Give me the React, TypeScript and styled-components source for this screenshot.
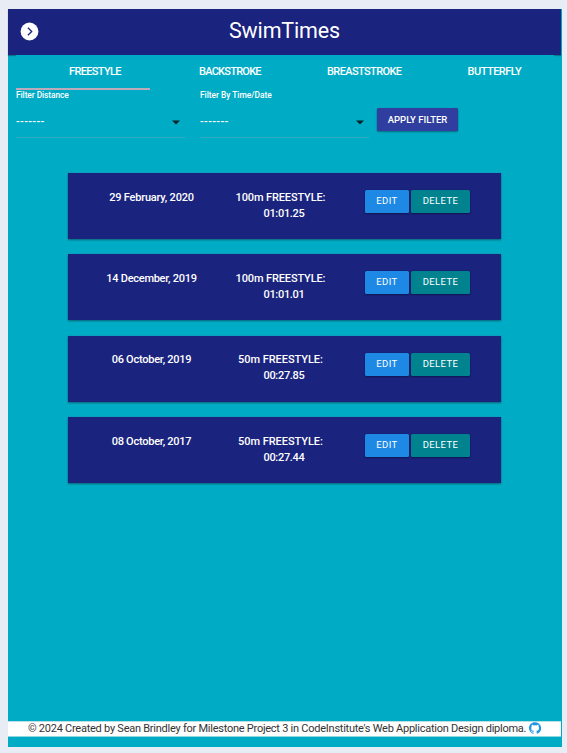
import React from "react";
import styled, { createGlobalStyle } from "styled-components";

const GlobalStyle = createGlobalStyle`
  * { box-sizing: border-box; }
  body {
    margin: 0;
    background: #e8edf5;
    font-family: "Roboto", "Liberation Sans", sans-serif;
    color: #fff;
  }
`;

const Page = styled.div`
  width: 567px;
  height: 753px;
  padding: 9px 5px 6px 8px;
`;

const Screen = styled.div`
  height: 738px;
  display: flex;
  flex-direction: column;
  background: #00acc5;
`;

const NavBar = styled.header`
  width: 553px;
  height: 46px;
  flex: none;
  display: grid;
  grid-template-columns: 46px 1fr 46px;
  align-items: center;
  background: #1a237e;
  box-shadow: 0 1px 1px rgba(0, 0, 0, 0.3);
`;

const MenuButton = styled.button`
  display: flex;
  margin: 0 0 2px 12px;
  padding: 0;
  border: 0;
  background: none;
`;

const Title = styled.h1`
  margin: 0;
  padding-bottom: 2px;
  text-align: center;
  font-size: 21.5px;
  font-weight: 400;
  line-height: 44px;
  letter-spacing: -0.15px;
`;

const Content = styled.main`
  flex: 1;
  padding: 0 8px;
`;

const Tabs = styled.nav`
  height: 35px;
  display: flex;
  position: relative;
  background: #00acc5;
`;

const Tab = styled.a<{ $active?: boolean; $indent: number; $spacing: number }>`
  width: 134px;
  height: 35px;
  flex: none;
  padding-left: ${(p) => p.$indent}px;
  border-bottom: 2px solid ${(p) => (p.$active ? "#bca9b9" : "transparent")};
  font-size: 11px;
  font-weight: 500;
  line-height: 33px;
  letter-spacing: ${(p) => p.$spacing}px;
  white-space: nowrap;
`;

const Filters = styled.form`
  display: flex;
  height: 48px;
`;

const Field = styled.div`
  width: 169px;
  height: 48px;
  margin-right: 15px;
  border-bottom: 1px solid #35a9bd;

  & + & { margin-right: 8px; }
`;

const Label = styled.label<{ $spacing: number }>`
  display: block;
  height: 12px;
  font-size: 8.4px;
  font-weight: 500;
  line-height: 11px;
  letter-spacing: ${(p) => p.$spacing}px;
  white-space: nowrap;
`;

const SelectValue = styled.div`
  height: 35px;
  padding: 5px 5px 0 0;
  display: flex;
  align-items: center;
  justify-content: space-between;
`;

const Dashes = styled.span`
  font-size: 11px;
  font-weight: 500;
  line-height: 14px;
  letter-spacing: 0.35px;
  white-space: nowrap;
`;

const Button = styled.button<{ $color: string; $width: number; $spacing?: number }>`
  width: ${(p) => p.$width}px;
  height: 23px;
  flex: none;
  padding: 0 0 2px;
  border: 0;
  border-radius: 1.5px;
  background: ${(p) => p.$color};
  color: #fff;
  box-shadow: 0 1px 2px rgba(0, 0, 0, 0.35), 0 0 1px rgba(0, 0, 0, 0.3);
  font-family: inherit;
  font-size: 9.5px;
  line-height: 21px;
  letter-spacing: ${(p) => p.$spacing ?? 0.4}px;
  text-align: center;
  white-space: nowrap;
`;

const ApplyButton = styled(Button)`
  margin-top: 18px;
  padding: 0;
  line-height: 23px;
  font-weight: 500;
`;

const Results = styled.section`
  width: 433px;
  margin: 35px 0 0 52px;
  display: flex;
  flex-direction: column;
  gap: 15.4px;
`;

const Card = styled.article`
  height: 66px;
  padding: 16.6px 31px 0 26px;
  display: grid;
  grid-template-columns: 115px 143px 1fr;
  background: #1a237e;
  box-shadow: 0 1px 2px rgba(0, 0, 0, 0.4), 0 0 1px rgba(80, 120, 160, 0.8);
  font-size: 11px;
  font-weight: 500;
  line-height: 16px;
  text-align: center;
`;

const DateText = styled.time<{ $spacing: number }>`
  letter-spacing: ${(p) => p.$spacing}px;
  white-space: nowrap;
`;

const Swim = styled.div<{ $spacing: number }>`
  letter-spacing: ${(p) => p.$spacing}px;
  white-space: nowrap;
`;

const Time = styled.div`
  letter-spacing: -0.3px;
  padding-left: 7px;
`;

const Actions = styled.div`
  padding-top: 0.5px;
  display: flex;
  justify-content: flex-end;
  gap: 2px;
`;

const Footer = styled.footer`
  width: 553px;
  height: 16px;
  flex: none;
  margin-bottom: 10px;
  padding: 0 0 1px 20px;
  display: flex;
  align-items: center;
  background: #fff;
  border-top: 1px solid #b9dfe6;
  border-bottom: 1px solid #8dd6e2;
  color: #333;
`;

const Credit = styled.span`
  width: 501px;
  font-size: 11px;
  line-height: 14px;
  letter-spacing: -0.25px;
  white-space: nowrap;
`;

const GitHubMark = styled.svg`
  margin-bottom: 2px;
`;

const tabs = [
  { name: "FREESTYLE", indent: 53, spacing: -0.65 },
  { name: "BACKSTROKE", indent: 49, spacing: -0.75 },
  { name: "BREASTSTROKE", indent: 43, spacing: -0.6 },
  { name: "BUTTERFLY", indent: 49.5, spacing: -0.5 },
];

const swims = [
  { date: "29 February, 2020", dateSpacing: -0.2, event: "100m FREESTYLE:", spacing: -0.13, time: "01:01.25" },
  { date: "14 December, 2019", dateSpacing: -0.27, event: "100m FREESTYLE:", spacing: -0.13, time: "01:01.01" },
  { date: "06 October, 2019", dateSpacing: -0.25, event: "50m FREESTYLE:", spacing: -0.05, time: "00:27.85" },
  { date: "08 October, 2017", dateSpacing: -0.25, event: "50m FREESTYLE:", spacing: -0.05, time: "00:27.44" },
];

const Select = ({ label, spacing }: { label: string; spacing: number }) => (
  <Field>
    <Label $spacing={spacing}>{label}</Label>
    <SelectValue>
      <Dashes>-------</Dashes>
      <svg width="8" height="5" viewBox="0 0 8 5">
        <path d="M0 .5h8L4 4.5z" fill="#08232a" />
      </svg>
    </SelectValue>
  </Field>
);

export default function App() {
  return (
    <>
      <GlobalStyle />
      <Page>
        <Screen>
          <NavBar>
            <MenuButton aria-label="Open menu">
              <svg width="19" height="19" viewBox="0 0 19 19" fill="none">
                <circle cx="9.5" cy="9.5" r="8.9" fill="#fff" />
                <path d="M7.9 5.7l3.8 3.8-3.8 3.8" stroke="#1a237e" strokeWidth="1.3" />
              </svg>
            </MenuButton>
            <Title>SwimTimes</Title>
          </NavBar>
          <Content>
            <Tabs>
              {tabs.map((t, i) => (
                <Tab key={t.name} $active={i === 0} $indent={t.indent} $spacing={t.spacing}>{t.name}</Tab>
              ))}
            </Tabs>
            <Filters>
              <Select label="Filter Distance" spacing={-0.08} />
              <Select label="Filter By Time/Date" spacing={-0.02} />
              <ApplyButton type="button" $color="#303f9f" $width={81} $spacing={0}>APPLY FILTER</ApplyButton>
            </Filters>
            <Results>
              {swims.map((s) => (
                <Card key={s.date}>
                  <DateText $spacing={s.dateSpacing}>{s.date}</DateText>
                  <Swim $spacing={s.spacing}>
                    {s.event}
                    <Time>{s.time}</Time>
                  </Swim>
                  <Actions>
                    <Button $color="#1e88e5" $width={44}>EDIT</Button>
                    <Button $color="#00838f" $width={59}>DELETE</Button>
                  </Actions>
                </Card>
              ))}
            </Results>
          </Content>
          <Footer>
            <Credit>© 2024 Created by Sean Brindley for Milestone Project 3 in CodeInstitute's Web Application Design diploma.</Credit>
            <GitHubMark width="12" height="12" viewBox="0 0 496 496" fill="#2196e3">
              <path d="M248 8C106 8 0 114 0 252c0 110 70 204 170 237 13 2 17-6 17-12v-43c-70 15-85-30-85-30-11-29-28-37-28-37-23-16 2-15 2-15 25 2 39 26 39 26 22 39 59 28 74 21 2-16 9-27 16-34-56-6-114-28-114-122 0-27 9-48 26-66-3-6-11-31 3-64 21-6 70 27 70 27a235 235 0 01126 0s49-34 70-27c14 33 6 58 3 64 16 18 26 39 26 66 0 95-58 116-114 122 9 8 17 23 17 47v65c0 7 5 15 17 12 100-34 168-127 168-237C496 114 386 8 248 8z" />
            </GitHubMark>
          </Footer>
        </Screen>
      </Page>
    </>
  );
}
